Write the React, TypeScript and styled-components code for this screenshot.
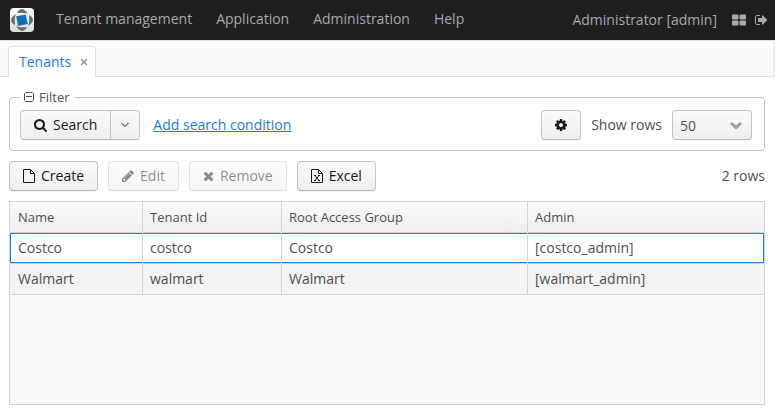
import React from "react";
import styled, { createGlobalStyle, css } from "styled-components";

const GlobalStyle = createGlobalStyle`
  *, *::before, *::after { box-sizing: border-box; }
  body {
    margin: 0;
    background: #fff;
    color: #4f4f4f;
    font: 400 14px/20px "Open Sans", "Noto Sans", sans-serif;
  }
  button, select { font: inherit; color: inherit; }
`;

const Page = styled.div`
  display: flex;
  flex-direction: column;
  min-height: 100vh;
`;

const Header = styled.header`
  display: flex;
  align-items: center;
  height: 40px;
  padding: 0 3px 0 10px;
  background: #1d1f21;
  color: #a9a9a9;
`;

const Logo = styled.svg`
  width: 24px;
  height: 24px;
  margin-right: 10px;
`;

const Menu = styled.nav`
  display: flex;
  flex: 1;
`;

const MenuItem = styled.button`
  padding: 0 12px 2px;
  border: 0;
  background: none;
  white-space: nowrap;
`;

const User = styled.span`
  margin-right: 11px;
`;

const IconButton = styled.button`
  display: flex;
  padding: 4px;
  border: 0;
  background: none;
  & + & { margin-left: 1px; }
`;

const Glyph = styled.svg<{ $width?: number; $height?: number }>`
  flex: none;
  width: ${(p) => p.$width ?? 14}px;
  height: ${(p) => p.$height ?? 14}px;
  fill: currentColor;
`;

const TabBar = styled.div`
  display: flex;
  align-items: flex-end;
  height: 37px;
  padding-left: 8px;
  background: #fafafa;
  border: 1px solid #dfdfdf;
  border-left: 0;
`;

const Tab = styled.div`
  display: flex;
  align-items: center;
  height: 31px;
  margin-bottom: -1px;
  padding: 0 6px 0 10px;
  border: 1px solid #dfdfdf;
  border-bottom: 0;
  border-radius: 4px 4px 0 0;
  background: #fff;
`;

const TabLabel = styled.button`
  padding: 0;
  border: 0;
  background: none;
  color: #197de1;
`;

const TabClose = styled.button`
  display: flex;
  margin-left: 8px;
  padding: 2px 0;
  border: 0;
  background: none;
  color: #8c8c8c;
`;

const Content = styled.main`
  display: flex;
  flex: 1;
  flex-direction: column;
  padding: 10px 10px 12px 9px;
`;

const Filter = styled.fieldset`
  min-width: 0;
  margin: 0;
  padding: 3px 12px 10px 10px;
  border: 1px solid #c5c5c5;
  border-radius: 4px;
`;

const FilterLegend = styled.legend`
  padding: 0 4px;
  font-size: 13px;
`;

const LegendToggle = styled.button`
  display: flex;
  align-items: center;
  gap: 5px;
  padding: 0;
  border: 0;
  background: none;
`;

const Bar = styled.div`
  display: flex;
  align-items: center;
  gap: 10px;
`;

const Spacer = styled.span`
  flex: 1;
`;

const raised = css`
  height: 30px;
  border: 1px solid #c5c5c5;
  border-bottom-color: #b8b8b8;
  border-radius: 4px;
  background: linear-gradient(#fafafa, #efefef);
  box-shadow: 0 1px 0 rgba(0, 0, 0, 0.04);
`;

const Button = styled.button<{ $joined?: "left" | "right" }>`
  ${raised}
  display: flex;
  align-items: center;
  justify-content: center;
  gap: 6px;
  padding: 0 13px;
  color: #191919;
  white-space: nowrap;
  ${(p) => p.$joined === "left" && css`border-radius: 4px 0 0 4px;`}
  ${(p) =>
    p.$joined === "right" &&
    css`
      margin-left: -1px;
      padding: 0 9px;
      border-radius: 0 4px 4px 0;
    `}
  &:disabled { opacity: 0.5; }
`;

const ButtonGroup = styled.div`
  display: flex;
`;

const Link = styled.a`
  margin-left: 3px;
  color: #197de1;
  text-decoration: underline;
`;

const SelectBox = styled.div`
  display: grid;
  align-items: center;
  width: 80px;
  > * { grid-area: 1 / 1; }
  > svg { justify-self: end; margin-right: 9px; pointer-events: none; }
`;

const Select = styled.select`
  ${raised}
  appearance: none;
  width: 100%;
  padding: 1px 28px 0 7px;
`;

const Actions = styled(Bar)`
  margin: 10px 0;
`;

const Grid = styled.div`
  flex: 1;
  border: 1px solid #d4d4d4;
  background: #fafafa;
`;

const Table = styled.table`
  width: 100%;
  table-layout: fixed;
  border-collapse: separate;
  border-spacing: 0;
  text-align: left;
`;

const Col = styled.col<{ $width?: number }>`
  width: ${(p) => (p.$width ? `${p.$width}px` : "auto")};
`;

const HeadCell = styled.th`
  height: 31px;
  padding: 0 8px;
  border-bottom: 1px solid #d4d4d4;
  background: linear-gradient(#fafafa, #efefef);
  font-size: 13px;
  font-weight: 400;
  & + & { padding-left: 7px; border-left: 1px solid #d4d4d4; }
`;

const Cell = styled.td`
  height: 31px;
  padding: 0 8px;
  border-bottom: 1px solid #d4d4d4;
  & + & { padding-left: 7px; border-left: 1px solid #d4d4d4; }
`;

const Row = styled.tr<{ $focused?: boolean }>`
  background: #fff;
  &:nth-child(even) { background: #f4f4f4; }
  ${(p) =>
    p.$focused &&
    css`
      ${Cell} { box-shadow: inset 0 1px #197de1, inset 0 -1px #197de1; }
      ${Cell}:first-child { box-shadow: inset 1px 1px #197de1, inset 0 -1px #197de1; }
      ${Cell}:last-child { box-shadow: inset -1px -1px #197de1, inset 0 1px #197de1; }
    `}
`;

const icons = {
  search: {
    width: 13,
    box: "64 0 1664 1792",
    path: "M1216 832q0-185-131.5-316.5t-316.5-131.5-316.5 131.5-131.5 316.5 131.5 316.5 316.5 131.5 316.5-131.5 131.5-316.5zm512 832q0 52-38 90t-90 38q-54 0-90-38l-343-342q-179 124-399 124-143 0-273.5-55.5t-225-150-150-225-55.5-273.5 55.5-273.5 150-225 225-150 273.5-55.5 273.5 55.5 225 150 150 225 55.5 273.5q0 220-124 399l343 343q37 37 37 90z",
  },
  cog: {
    width: 12,
    box: "128 0 1536 1792",
    path: "M1152 896q0-106-75-181t-181-75-181 75-75 181 75 181 181 75 181-75 75-181zm512-109v222q0 12-8 23t-20 13l-185 28q-19 54-39 91 35 50 107 138 10 12 10 25t-9 23q-27 37-99 108t-94 71q-12 0-26-9l-138-108q-44 23-91 38-16 136-29 186-7 28-36 28h-222q-14 0-24.5-8.5t-11.5-21.5l-28-184q-49-16-90-37l-141 107q-10 9-25 9-14 0-25-11-126-114-165-168-7-10-7-23 0-12 8-23 15-21 51-66.5t54-70.5q-27-50-41-99l-183-27q-13-2-21-12.5t-8-23.5v-222q0-12 8-23t19-13l186-28q14-46 39-92-40-57-107-138-10-12-10-24 0-10 9-23 26-36 98.5-107.5t94.5-71.5q13 0 26 10l138 107q44-23 91-38 16-136 29-186 7-28 36-28h222q14 0 24.5 8.5t11.5 21.5l28 184q49 16 90 37l142-107q9-9 24-9 13 0 25 10 129 119 165 170 7 8 7 22 0 12-8 23-15 21-51 66.5t-54 70.5q26 50 41 98l183 28q13 2 21 12.5t8 23.5z",
  },
  signOut: {
    width: 13,
    box: "64 0 1664 1792",
    path: "M704 1440q0 4 1 20t.5 26.5-3 23.5-10 19.5-20.5 6.5h-320q-119 0-203.5-84.5t-84.5-203.5v-704q0-119 84.5-203.5t203.5-84.5h320q13 0 22.5 9.5t9.5 22.5q0 4 1 20t.5 26.5-3 23.5-10 19.5-20.5 6.5h-320q-66 0-113 47t-47 113v704q0 66 47 113t113 47h312l11.5 1 11.5 3 8 5.5 7 9 2 13.5zm928-544q0 26-19 45l-544 544q-19 19-45 19t-45-19-19-45v-288h-448q-26 0-45-19t-19-45v-384q0-26 19-45t45-19h448v-288q0-26 19-45t45-19 45 19l544 544q19 19 19 45z",
  },
  times: {
    width: 11,
    box: "192 0 1408 1792",
    path: "M1490 1322q0 40-28 68l-136 136q-28 28-68 28t-68-28l-294-294-294 294q-28 28-68 28t-68-28l-136-136q-28-28-28-68t28-68l294-294-294-294q-28-28-28-68t28-68l136-136q28-28 68-28t68 28l294 294 294-294q28-28 68-28t68 28l136 136q28 28 28 68t-28 68l-294 294 294 294q28 28 28 68z",
  },
  pencil: {
    width: 12,
    box: "128 0 1536 1792",
    path: "M491 1536l91-91-235-235-91 91v107h128v128h107zm523-928q0-22-22-22-10 0-17 7l-542 542q-7 7-7 17 0 22 22 22 10 0 17-7l542-542q7-7 7-17zm-54-192l416 416-832 832h-416v-416zm683 96q0 53-37 90l-166 166-416-416 166-165q36-38 90-38 53 0 91 38l235 234q37 39 37 91z",
  },
};

function Icon({ name }: { name: keyof typeof icons }) {
  const { width, box, path } = icons[name];
  return (
    <Glyph $width={width} viewBox={box} aria-hidden="true">
      <path d={path} />
    </Glyph>
  );
}

function FileIcon({ sheet }: { sheet?: boolean }) {
  return (
    <Glyph $width={12} viewBox="0 0 12 14" aria-hidden="true">
      <g fill="none" stroke="currentColor">
        <path d="M.5.5h7l4 4v9H.5z" />
        <path d="M7.500.5v4h4" />
        {sheet && <path d="M4 6.500l4 5M8 6.500l-4 5M3 6.500h2M7 6.500h2M3 11.500h2M7 11.500h2" />}
      </g>
    </Glyph>
  );
}

const menu = ["Tenant management", "Application", "Administration", "Help"];
const columns = [
  { title: "Name", width: 132 },
  { title: "Tenant Id", width: 139 },
  { title: "Root Access Group", width: 246 },
  { title: "Admin" },
];
const tenants = [
  ["Costco", "costco", "Costco", "[costco_admin]"],
  ["Walmart", "walmart", "Walmart", "[walmart_admin]"],
];

export default function App() {
  return (
    <Page>
      <GlobalStyle />
      <Header>
        <Logo viewBox="0 0 24 24" aria-hidden="true">
          <defs>
            <linearGradient id="tile" x2="0" y2="1">
              <stop stopColor="#fff" />
              <stop offset="1" stopColor="#dcdcdc" />
            </linearGradient>
          </defs>
          <rect width="24" height="24" rx="4" fill="url(#tile)" />
          <g fill="#6a6a6a">
            {[0, 90, 180, 270].map((turn) => (
              <path
                key={turn}
                transform={`rotate(${turn} 12 12)`}
                d="M7 5Q8.500 1.500 12 1 15.500 1.500 18 6.500L16.300 5.200Q12 4.300 7 5z"
              />
            ))}
          </g>
          <path fill="#0f6fb8" d="M6.200 8.300l9.600-1.800 1.900 9.600-9.600 1.900z" />
        </Logo>
        <Menu>
          {menu.map((item) => (
            <MenuItem key={item}>{item}</MenuItem>
          ))}
        </Menu>
        <User>Administrator [admin]</User>
        <IconButton aria-label="New window">
          <Glyph viewBox="0 0 14 14" aria-hidden="true">
            <path d="M1 1.500h4.500q1 0 1 1v3q0 1-1 1H1q-1 0-1-1v-3q0-1 1-1zM8.500 1.500H13q1 0 1 1v3q0 1-1 1H8.500q-1 0-1-1v-3q0-1 1-1zM1 7.500h4.500q1 0 1 1v3q0 1-1 1H1q-1 0-1-1v-3q0-1 1-1zM8.500 7.500H13q1 0 1 1v3q0 1-1 1H8.500q-1 0-1-1v-3q0-1 1-1z" />
          </Glyph>
        </IconButton>
        <IconButton aria-label="Log out">
          <Icon name="signOut" />
        </IconButton>
      </Header>

      <TabBar role="tablist">
        <Tab>
          <TabLabel role="tab" aria-selected="true">Tenants</TabLabel>
          <TabClose aria-label="Close tab">
            <Glyph $width={10} $height={10} viewBox="0 0 10 10" aria-hidden="true">
              <path fill="none" stroke="currentColor" strokeWidth="1.3" d="M2 2l6 6M8 2l-6 6" />
            </Glyph>
          </TabClose>
        </Tab>
      </TabBar>

      <Content>
        <Filter>
          <FilterLegend>
            <LegendToggle aria-expanded="true">
              <Glyph $width={10} $height={10} viewBox="0 0 10 10" aria-hidden="true">
                <path fill="none" stroke="currentColor" d="M1.500.5h7l1 1v7l-1 1h-7l-1-1v-7zM2 4.500h6" />
              </Glyph>
              Filter
            </LegendToggle>
          </FilterLegend>
          <Bar>
            <ButtonGroup>
              <Button $joined="left">
                <Icon name="search" />
                Search
              </Button>
              <Button $joined="right" aria-label="Search options">
                <Glyph $width={10} $height={10} viewBox="0 0 10 10" aria-hidden="true">
                  <path fill="none" stroke="currentColor" d="M1.500 3l3.500 3.500 3.500-3.500" />
                </Glyph>
              </Button>
            </ButtonGroup>
            <Link href="#condition">Add search condition</Link>
            <Spacer />
            <Button aria-label="Filter settings">
              <Icon name="cog" />
            </Button>
            <label htmlFor="rows">Show rows</label>
            <SelectBox>
              <Select id="rows" defaultValue="50">
                <option>20</option>
                <option>50</option>
                <option>100</option>
              </Select>
              <Glyph viewBox="0 0 14 14" aria-hidden="true">
                <path fill="none" stroke="#9b9b9b" strokeWidth="3" d="M2 5l5 4.500 5-4.500" />
              </Glyph>
            </SelectBox>
          </Bar>
        </Filter>

        <Actions>
          <Button>
            <FileIcon />
            Create
          </Button>
          <Button disabled>
            <Icon name="pencil" />
            Edit
          </Button>
          <Button disabled>
            <Icon name="times" />
            Remove
          </Button>
          <Button>
            <FileIcon sheet />
            Excel
          </Button>
          <Spacer />
          <span>2 rows</span>
        </Actions>

        <Grid>
          <Table>
            <colgroup>
              {columns.map((c) => (
                <Col key={c.title} $width={c.width} />
              ))}
            </colgroup>
            <thead>
              <tr>
                {columns.map((c) => (
                  <HeadCell key={c.title} scope="col">{c.title}</HeadCell>
                ))}
              </tr>
            </thead>
            <tbody>
              {tenants.map((cells, i) => (
                <Row key={cells[1]} $focused={i === 0}>
                  {cells.map((text, j) => (
                    <Cell key={j}>{text}</Cell>
                  ))}
                </Row>
              ))}
            </tbody>
          </Table>
        </Grid>
      </Content>
    </Page>
  );
}
